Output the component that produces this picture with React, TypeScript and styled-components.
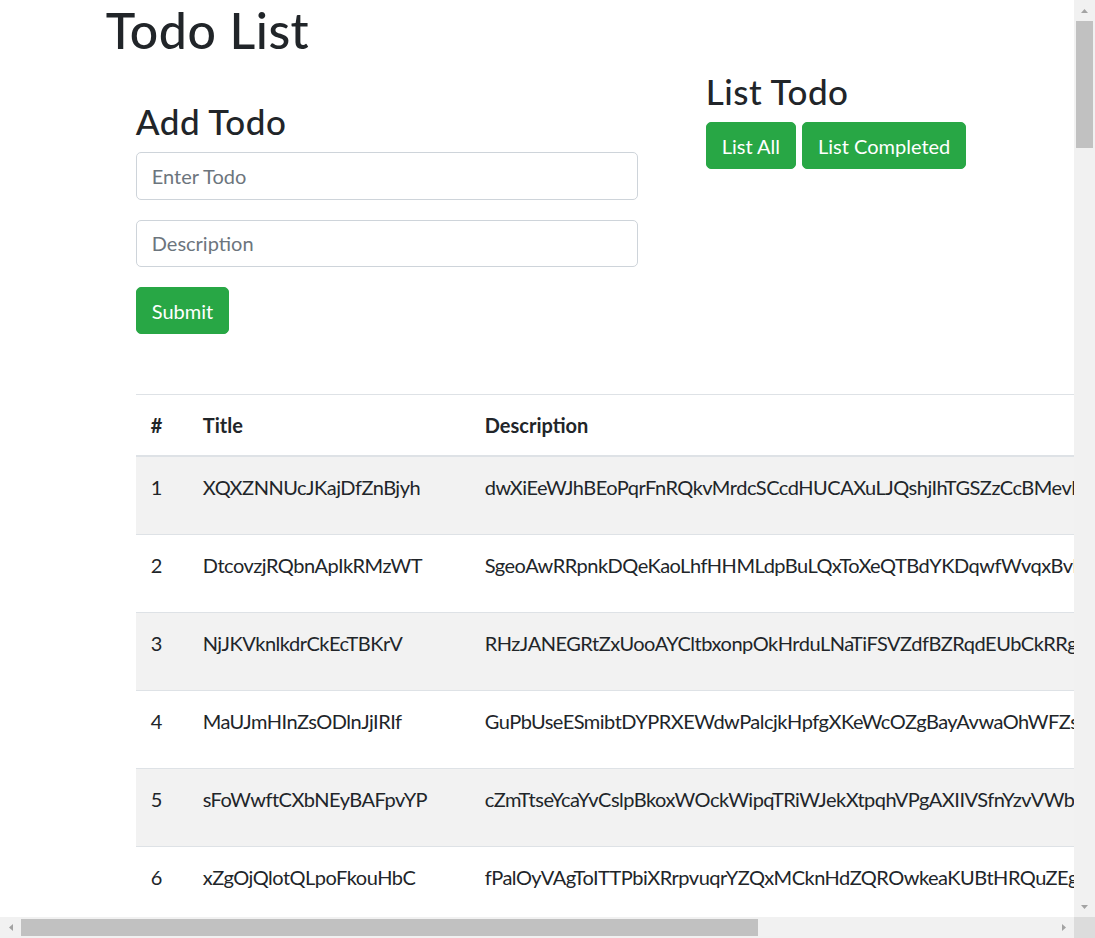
import React from "react";
import styled, { createGlobalStyle } from "styled-components";

const GlobalStyle = createGlobalStyle`
  *, *::before, *::after { box-sizing: border-box; }
  html, body { margin: 0; padding: 0; background: #ffffff; overflow: hidden; }
  body {
    font-family: Lato, "Liberation Sans", sans-serif;
    font-size: 20px;
    line-height: 1.5;
    color: #212529;
  }
`;

/* ---------- browser frame with classic scrollbars ---------- */

const Frame = styled.div`
  display: grid;
  grid-template-columns: minmax(0, 1fr) 21px;
  grid-template-rows: minmax(0, 1fr) 21px;
  width: 100vw;
  height: 100vh;
`;

const Pane = styled.div`
  overflow: hidden;
  background: #ffffff;
`;

const ScrollBar = styled.div<{ $dir: "v" | "h" }>`
  display: flex;
  flex-direction: ${(p) => (p.$dir === "v" ? "column" : "row")};
  background: #f1f1f1;
`;

const ScrollArrow = styled.div`
  flex: 0 0 21px;
  display: flex;
  align-items: center;
  justify-content: center;
  width: 21px;
  height: 21px;
`;

const ScrollTrack = styled.div<{ $dir: "v" | "h" }>`
  flex: 1;
  display: flex;
  flex-direction: ${(p) => (p.$dir === "v" ? "column" : "row")};
  padding: ${(p) => (p.$dir === "v" ? "0 2px" : "2px 0")};
`;

const ScrollThumb = styled.div<{ $size: number }>`
  flex: 0 0 ${(p) => p.$size}px;
  background: #c1c1c1;
`;

const Corner = styled.div`
  background: #dcdcdc;
`;

const Arrow = ({ dir }: { dir: "up" | "down" | "left" | "right" }) => {
  const pts = {
    up: "0,4 7,4 3.5,0",
    down: "0,0 7,0 3.5,4",
    left: "4,0 4,7 0,3.5",
    right: "0,0 0,7 4,3.5",
  }[dir];
  const vertical = dir === "up" || dir === "down";
  return (
    <svg width={vertical ? 7 : 4} height={vertical ? 4 : 7} viewBox={vertical ? "0 0 7 4" : "0 0 4 7"}>
      <polygon points={pts} fill="#a3a3a3" />
    </svg>
  );
};

/* ---------- page ---------- */

const Container = styled.div`
  width: 900px;
  margin: 0 auto;
  padding: 0 18.75px;
`;

const PageTitle = styled.h1`
  margin: 0 0 10px;
  font-size: 50px;
  font-weight: 500;
  line-height: 1.2;
  letter-spacing: 0.5px;
`;

const Content = styled.main`
  padding-left: 30px;
`;

const TopGrid = styled.div`
  display: grid;
  grid-template-columns: 502px 1fr;
  column-gap: 68px;
  align-items: start;
`;

const AddPanel = styled.section`
  padding-top: 30px;
`;

const ListPanel = styled.section``;

const SectionTitle = styled.h3`
  margin: 0 0 10px;
  font-size: 35px;
  font-weight: 500;
  line-height: 1.2;
  letter-spacing: 0.5px;
`;

const Form = styled.form`
  margin: 0;
`;

const FormGroup = styled.div`
  margin-bottom: 20px;
`;

const TextInput = styled.input`
  display: block;
  width: 100%;
  height: 47.5px;
  padding: 7.5px 15px;
  font-family: inherit;
  font-size: 20px;
  line-height: 1.5;
  color: #495057;
  background: #ffffff;
  border: 1.25px solid #ced4da;
  border-radius: 5px;
  outline: none;
  &::placeholder { color: #6c757d; }
`;

const Button = styled.button<{ $tone?: "green" | "yellow" | "red" }>`
  display: inline-block;
  padding: 7.5px 15px;
  font-family: inherit;
  font-size: 20px;
  font-weight: 400;
  line-height: 1.5;
  color: ${(p) => (p.$tone === "yellow" ? "#212529" : "#ffffff")};
  background: ${(p) =>
    p.$tone === "yellow" ? "#ffc107" : p.$tone === "red" ? "#dc3545" : "#28a745"};
  border: 1.25px solid
    ${(p) => (p.$tone === "yellow" ? "#ffc107" : p.$tone === "red" ? "#dc3545" : "#28a745")};
  border-radius: 5px;
  cursor: pointer;
  white-space: nowrap;
`;

const ButtonRow = styled.div`
  display: flex;
  gap: 6px;
`;

const TableWrap = styled.div`
  margin-top: 60px;
  margin-bottom: 20px;
`;

const TodoTable = styled.table`
  width: 1368px;
  table-layout: fixed;
  border-collapse: collapse;
  color: #212529;
`;

const HeadCell = styled.th<{ $w: number }>`
  width: ${(p) => p.$w}px;
  padding: 15px;
  text-align: left;
  font-weight: 700;
  vertical-align: bottom;
  white-space: nowrap;
  border-top: 1px solid #dee2e6;
  border-bottom: 2px solid #dee2e6;
`;

const BodyRow = styled.tr<{ $striped: boolean }>`
  background: ${(p) => (p.$striped ? "#f2f2f2" : "transparent")};
`;

const Cell = styled.td`
  padding: 15px;
  vertical-align: top;
  white-space: nowrap;
  overflow: hidden;
  letter-spacing: -0.5px;
  border-top: 1px solid #dee2e6;
`;

const ActionGroup = styled.div`
  display: flex;
  gap: 6px;
  letter-spacing: normal;
`;

type Todo = { title: string; description: string; done: boolean };

const visible: Todo[] = [
  { title: "XQXZNNUcJKajDfZnBjyh", description: "dwXiEeWJhBEoPqrFnRQkvMrdcSCcdHUCAXuLJQshjIhTGSZzCcBMevKqTwrLs", done: false },
  { title: "DtcovzjRQbnApIkRMzWT", description: "SgeoAwRRpnkDQeKaoLhfHHMLdpBuLQxToXeQTBdYKDqwfWvqxBvNmaRcdUe", done: false },
  { title: "NjJKVknlkdrCkEcTBKrV", description: "RHzJANEGRtZxUooAYCltbxonpOkHrduLNaTiFSVZdfBZRqdEUbCkRRgHwpLa", done: true },
  { title: "MaUJmHInZsODlnJjIRIf", description: "GuPbUseESmibtDYPRXEWdwPalcjkHpfgXKeWcOZgBayAvwaOhWFZsQyTunLk", done: false },
  { title: "sFoWwftCXbNEyBAFpvYP", description: "cZmTtseYcaYvCslpBkoxWOckWipqTRiWJekXtpqhVPgAXIIVSfnYzvVWbhRdm", done: false },
  { title: "xZgOjQlotQLpoFkouHbC", description: "fPalOyVAgToITTPbiXRrpvuqrYZQxMCknHdZQROwkeaKUBtHRQuZEgLmNsaY", done: true },
];

function buildTodos(): Todo[] {
  const letters = "ABCDEFGHIJKLMNOPQRSTUVWXYZabcdefghijklmnopqrstuvwxyz";
  let seed = 20240611;
  const rnd = () => {
    seed = (seed * 1103515245 + 12345) & 0x7fffffff;
    return seed / 0x7fffffff;
  };
  const word = (n: number) => {
    let s = "";
    for (let i = 0; i < n; i++) s += letters[Math.floor(rnd() * letters.length)];
    return s;
  };
  const list = [...visible];
  while (list.length < 74) {
    list.push({ title: word(20), description: word(60), done: rnd() > 0.5 });
  }
  return list;
}

const todos = buildTodos();

export default function App() {
  return (
    <Frame>
      <GlobalStyle />
      <Pane>
        <Container>
          <PageTitle>Todo List</PageTitle>
          <Content>
            <TopGrid>
              <AddPanel>
                <SectionTitle>Add Todo</SectionTitle>
                <Form onSubmit={(e) => e.preventDefault()}>
                  <FormGroup>
                    <TextInput type="text" placeholder="Enter Todo" />
                  </FormGroup>
                  <FormGroup>
                    <TextInput type="text" placeholder="Description" />
                  </FormGroup>
                  <Button type="submit">Submit</Button>
                </Form>
              </AddPanel>
              <ListPanel>
                <SectionTitle>List Todo</SectionTitle>
                <ButtonRow>
                  <Button type="button">List All</Button>
                  <Button type="button">List Completed</Button>
                </ButtonRow>
              </ListPanel>
            </TopGrid>
            <TableWrap>
              <TodoTable>
                <thead>
                  <tr>
                    <HeadCell $w={52}>#</HeadCell>
                    <HeadCell $w={282}>Title</HeadCell>
                    <HeadCell $w={700}>Description</HeadCell>
                    <HeadCell $w={140}>Status</HeadCell>
                    <HeadCell $w={194}>Actions</HeadCell>
                  </tr>
                </thead>
                <tbody>
                  {todos.map((t, i) => (
                    <BodyRow key={i} $striped={i % 2 === 0}>
                      <Cell>{i + 1}</Cell>
                      <Cell>{t.title}</Cell>
                      <Cell>{t.description}</Cell>
                      <Cell>{t.done ? "Completed" : "Pending"}</Cell>
                      <Cell>
                        <ActionGroup>
                          <Button type="button" $tone="yellow">Done</Button>
                          <Button type="button" $tone="red">Delete</Button>
                        </ActionGroup>
                      </Cell>
                    </BodyRow>
                  ))}
                </tbody>
              </TodoTable>
            </TableWrap>
          </Content>
        </Container>
      </Pane>
      <ScrollBar $dir="v">
        <ScrollArrow><Arrow dir="up" /></ScrollArrow>
        <ScrollTrack $dir="v">
          <ScrollThumb $size={127} />
        </ScrollTrack>
        <ScrollArrow><Arrow dir="down" /></ScrollArrow>
      </ScrollBar>
      <ScrollBar $dir="h">
        <ScrollArrow><Arrow dir="left" /></ScrollArrow>
        <ScrollTrack $dir="h">
          <ScrollThumb $size={737} />
        </ScrollTrack>
        <ScrollArrow><Arrow dir="right" /></ScrollArrow>
      </ScrollBar>
      <Corner />
    </Frame>
  );
}
